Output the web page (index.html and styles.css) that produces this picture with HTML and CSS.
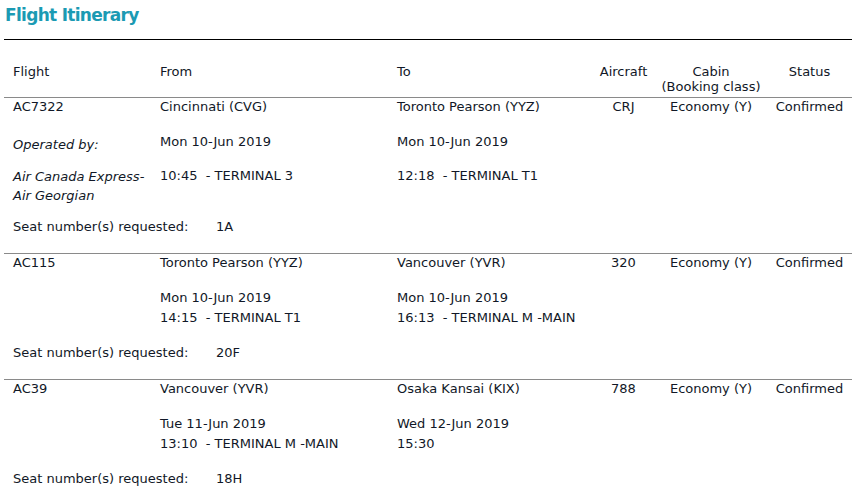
FILE: index.html
```html
<!DOCTYPE html>
<html lang="en">
<head>
<meta charset="utf-8">
<title>Flight Itinerary</title>
<link rel="stylesheet" href="styles.css">
</head>
<body>
<div class="page">
  <h1 class="title">Flight Itinerary</h1>

  <div class="row head">
    <div class="c">Flight</div>
    <div class="c">From</div>
    <div class="c">To</div>
    <div class="c mid">Aircraft</div>
    <div class="c mid">Cabin<br>(Booking class)</div>
    <div class="c mid st">Status</div>
  </div>

  <div class="seg">
    <div class="row main">
      <div class="c">AC7322</div>
      <div class="c">Cincinnati (CVG)</div>
      <div class="c">Toronto Pearson (YYZ)</div>
      <div class="c mid">CRJ</div>
      <div class="c mid">Economy (Y)</div>
      <div class="c mid st">Confirmed</div>
    </div>
    <div class="row sub op-date">
      <div class="c op-label">Operated by:</div>
      <div class="c">Mon 10-Jun 2019</div>
      <div class="c">Mon 10-Jun 2019</div>
    </div>
    <div class="row sub op-time">
      <div class="c op-name">Air Canada Express-<br>Air Georgian</div>
      <div class="c">10:45&nbsp; - TERMINAL 3</div>
      <div class="c">12:18&nbsp; - TERMINAL T1</div>
    </div>
    <div class="seat"><span class="seat-label">Seat number(s) requested:</span><span>1A</span></div>
  </div>

  <div class="seg">
    <div class="row main">
      <div class="c">AC115</div>
      <div class="c">Toronto Pearson (YYZ)</div>
      <div class="c">Vancouver (YVR)</div>
      <div class="c mid">320</div>
      <div class="c mid">Economy (Y)</div>
      <div class="c mid st">Confirmed</div>
    </div>
    <div class="row sub">
      <div class="c"></div>
      <div class="c">Mon 10-Jun 2019</div>
      <div class="c">Mon 10-Jun 2019</div>
    </div>
    <div class="row sub">
      <div class="c"></div>
      <div class="c">14:15&nbsp; - TERMINAL T1</div>
      <div class="c">16:13&nbsp; - TERMINAL M -MAIN</div>
    </div>
    <div class="seat"><span class="seat-label">Seat number(s) requested:</span><span>20F</span></div>
  </div>

  <div class="seg">
    <div class="row main">
      <div class="c">AC39</div>
      <div class="c">Vancouver (YVR)</div>
      <div class="c">Osaka Kansai (KIX)</div>
      <div class="c mid">788</div>
      <div class="c mid">Economy (Y)</div>
      <div class="c mid st">Confirmed</div>
    </div>
    <div class="row sub">
      <div class="c"></div>
      <div class="c">Tue 11-Jun 2019</div>
      <div class="c">Wed 12-Jun 2019</div>
    </div>
    <div class="row sub">
      <div class="c"></div>
      <div class="c">13:10&nbsp; - TERMINAL M -MAIN</div>
      <div class="c">15:30</div>
    </div>
    <div class="seat"><span class="seat-label">Seat number(s) requested:</span><span>18H</span></div>
  </div>
</div>
</body>
</html>
```

FILE: styles.css
```css
html, body {
  margin: 0;
  padding: 0;
  background: #ffffff;
}

body {
  font-family: "DejaVu Sans", Verdana, sans-serif;
  font-size: 13px;
  color: #111827;
}

.page {
  width: 848px;
  padding: 0 6px 0 4px;
}

.title {
  margin: 0;
  padding: 4px 0 13px 1px;
  font-size: 17px;
  line-height: 22px;
  font-weight: bold;
  letter-spacing: -0.7px;
  color: #1b9ab3;
  border-bottom: 1px solid #000000;
}

.row {
  display: grid;
  grid-template-columns: 147px 237px 208px 55px 120px 81px;
}

.c {
  padding-left: 9px;
  white-space: nowrap;
}

.c.mid {
  padding-left: 0;
  text-align: center;
}

.c.st {
  padding-right: 4px;
}

.head {
  padding: 24px 0 3px;
  line-height: 15px;
}

.seg {
  border-top: 1px solid #8a8a8a;
  padding-top: 1px;
  padding-bottom: 16px;
}

.main {
  line-height: 16px;
  padding-bottom: 17px;
}

.sub {
  line-height: 20px;
}

.op-date .op-label {
  padding-top: 3px;
  padding-bottom: 11px;
  font-style: italic;
}

.op-time .op-name {
  line-height: 19px;
  padding-top: 0.5px;
  font-style: italic;
  margin-bottom: -3px;
}

.seat {
  padding: 15px 0 0 9px;
  line-height: 20px;
  display: flex;
}

.seat-label {
  width: 203px;
}
```
